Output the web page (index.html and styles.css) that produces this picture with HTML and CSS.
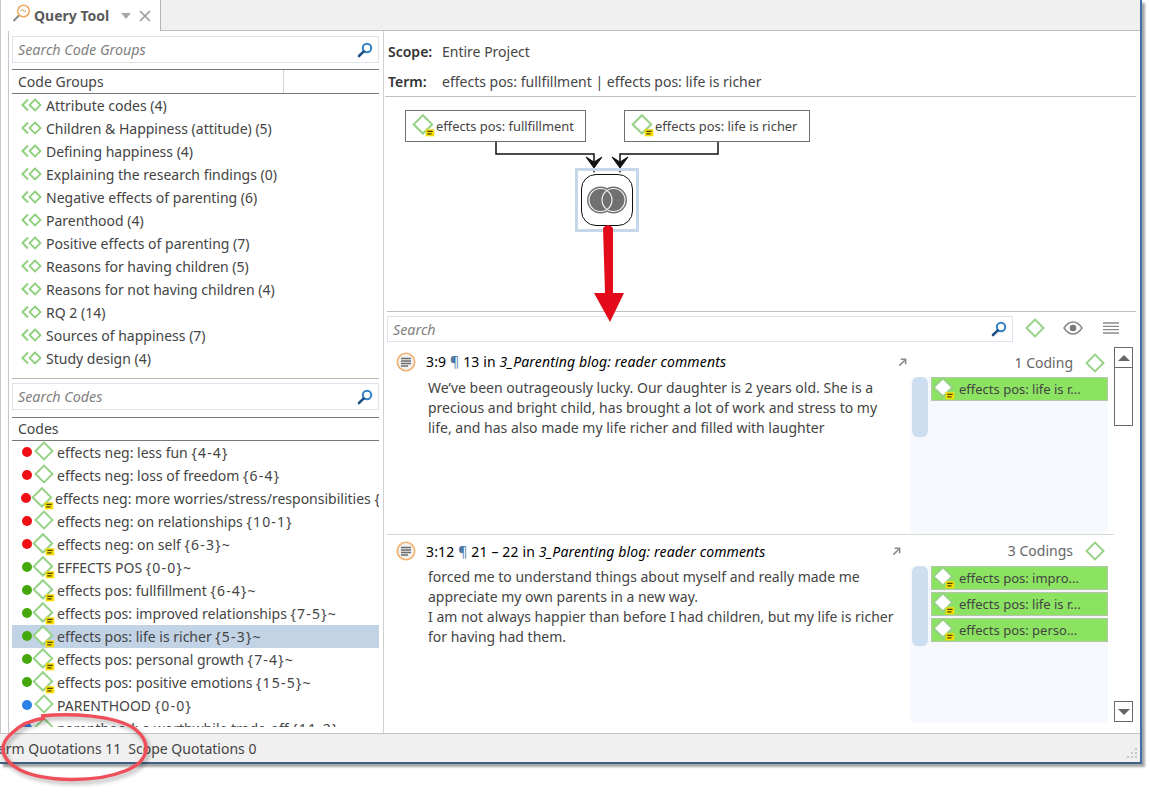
FILE: index.html
```html
<!DOCTYPE html>
<html lang="en">
<head>
<meta charset="utf-8">
<title>Query Tool</title>
<link rel="stylesheet" href="styles.css">
</head>
<body>
<svg class="defs" width="0" height="0" aria-hidden="true">
  <defs>
    <symbol id="search" viewBox="0 0 16 16">
      <circle cx="10" cy="6" r="4.2" fill="#fff" stroke="#2f7fc4" stroke-width="2"/>
      <path d="M6.8 9.4 2 14" stroke="#1d4f86" stroke-width="2.6" stroke-linecap="round"/>
    </symbol>
    <symbol id="code" viewBox="0 0 20 20">
      <path d="M10 1.500 18.500 10 10 18.500 1.500 10Z" fill="#fff" stroke="#96d286" stroke-width="1.900"/>
    </symbol>
    <symbol id="codememo" viewBox="0 0 24 24">
      <path d="M11 2 19.500 10.500 11 19 2.500 10.500Z" fill="#fff" stroke="#96d286" stroke-width="1.900"/>
      <rect x="13.500" y="15" width="8" height="6.500" fill="#f6dc00"/>
      <path d="M15 17h5M15 19.200h4" stroke="#4a4400" stroke-width="1.100"/>
    </symbol>
    <symbol id="group" viewBox="0 0 22 14">
      <path d="M7 1.500 1.500 7 7 12.500" fill="none" stroke="#8ed07c" stroke-width="2"/>
      <path d="M14 1.500 19.500 7 14 12.500 8.500 7Z" fill="#fff" stroke="#8ed07c" stroke-width="1.800"/>
    </symbol>
    <symbol id="quote" viewBox="0 0 20 20">
      <circle cx="10" cy="10" r="8.700" fill="#f1f1f1" stroke="#f3b06c" stroke-width="1.600"/>
      <path d="M5 6.500h10M5 9h10M5 11.500h10M5 14h7" stroke="#6c6c6c" stroke-width="1.400"/>
    </symbol>
    <symbol id="jump" viewBox="0 0 10 10">
      <path d="M1.500 8.500 7.500 2.500M3 1.500h5.500V7" fill="none" stroke="#8a8a8a" stroke-width="1.700"/>
    </symbol>
  </defs>
</svg>

<div class="window">
  <header class="tabbar">
    <div class="tab">
      <svg class="tab-icon" viewBox="0 0 20 20"><circle cx="12.500" cy="7" r="5.800" fill="#fff" stroke="#f0a860" stroke-width="1.500"/><path d="M8 11.500 2.500 17" stroke="#8a8a8a" stroke-width="2"/><path d="M9.500 7l2-1.500 2 2 1.500-1" fill="none" stroke="#c98a50"/></svg>
      <span class="tab-title">Query Tool</span>
      <span class="tab-caret"></span>
      <svg class="tab-close" viewBox="0 0 12 12"><path d="M1 1 11 11M11 1 1 11" stroke="#9a9a9a" stroke-width="1.600"/></svg>
    </div>
  </header>

  <main class="content">
    <aside class="left">
      <section class="panel panel-groups">
        <div class="search"><span class="search-text">Search Code Groups</span><svg class="search-icon"><use href="#search"/></svg></div>
        <div class="list-head"><span class="list-head-cell">Code Groups</span></div>
        <ul class="list">
          <li class="group"><svg class="group-icon"><use href="#group"/></svg>Attribute codes (4)</li>
          <li class="group"><svg class="group-icon"><use href="#group"/></svg>Children &amp; Happiness (attitude) (5)</li>
          <li class="group"><svg class="group-icon"><use href="#group"/></svg>Defining happiness (4)</li>
          <li class="group"><svg class="group-icon"><use href="#group"/></svg>Explaining the research findings (0)</li>
          <li class="group"><svg class="group-icon"><use href="#group"/></svg>Negative effects of parenting (6)</li>
          <li class="group"><svg class="group-icon"><use href="#group"/></svg>Parenthood (4)</li>
          <li class="group"><svg class="group-icon"><use href="#group"/></svg>Positive effects of parenting (7)</li>
          <li class="group"><svg class="group-icon"><use href="#group"/></svg>Reasons for having children (5)</li>
          <li class="group"><svg class="group-icon"><use href="#group"/></svg>Reasons for not having children (4)</li>
          <li class="group"><svg class="group-icon"><use href="#group"/></svg>RQ 2 (14)</li>
          <li class="group"><svg class="group-icon"><use href="#group"/></svg>Sources of happiness (7)</li>
          <li class="group"><svg class="group-icon"><use href="#group"/></svg>Study design (4)</li>
        </ul>
      </section>
      <section class="panel panel-codes">
        <div class="search"><span class="search-text">Search Codes</span><svg class="search-icon"><use href="#search"/></svg></div>
        <div class="list-head"><span>Codes</span></div>
        <ul class="list list-codes">
          <li class="code"><i class="dot red"></i><svg class="code-icon"><use href="#code"/></svg><span>effects neg: less fun <span class="cnt">{4-4}</span></span></li>
          <li class="code"><i class="dot red"></i><svg class="code-icon"><use href="#code"/></svg><span>effects neg: loss of freedom <span class="cnt">{6-4}</span></span></li>
          <li class="code code-shift"><i class="dot red"></i><svg class="code-icon memo"><use href="#codememo"/></svg><span>effects neg: more worries/stress/responsibilities <span class="cnt">{11-2}~</span></span></li>
          <li class="code"><i class="dot red"></i><svg class="code-icon"><use href="#code"/></svg><span>effects neg: on relationships <span class="cnt">{10-1}</span></span></li>
          <li class="code"><i class="dot red"></i><svg class="code-icon memo"><use href="#codememo"/></svg><span>effects neg: on self <span class="cnt">{6-3}~</span></span></li>
          <li class="code"><i class="dot green"></i><svg class="code-icon memo"><use href="#codememo"/></svg><span>EFFECTS POS <span class="cnt">{0-0}~</span></span></li>
          <li class="code"><i class="dot green"></i><svg class="code-icon memo"><use href="#codememo"/></svg><span>effects pos: fullfillment <span class="cnt">{6-4}~</span></span></li>
          <li class="code"><i class="dot green"></i><svg class="code-icon memo"><use href="#codememo"/></svg><span>effects pos: improved relationships <span class="cnt">{7-5}~</span></span></li>
          <li class="code selected"><i class="dot green"></i><svg class="code-icon memo"><use href="#codememo"/></svg><span>effects pos: life is richer <span class="cnt">{5-3}~</span></span></li>
          <li class="code"><i class="dot green"></i><svg class="code-icon memo"><use href="#codememo"/></svg><span>effects pos: personal growth <span class="cnt">{7-4}~</span></span></li>
          <li class="code"><i class="dot green"></i><svg class="code-icon memo"><use href="#codememo"/></svg><span>effects pos: positive emotions <span class="cnt">{15-5}~</span></span></li>
          <li class="code"><i class="dot blue"></i><svg class="code-icon"><use href="#code"/></svg><span>PARENTHOOD <span class="cnt">{0-0}</span></span></li>
          <li class="code"><i class="dot blue"></i><svg class="code-icon"><use href="#code"/></svg><span>parenthood: a worthwhile trade-off <span class="cnt">{11-2}</span></span></li>
        </ul>
      </section>
    </aside>

    <section class="right">
      <div class="meta">
        <div class="meta-row"><b class="meta-label">Scope:</b><span>Entire Project</span></div>
        <div class="meta-row"><b class="meta-label">Term:</b><span>effects pos: fullfillment | effects pos: life is richer</span></div>
      </div>

      <div class="diagram">
        <div class="node node-a"><svg class="node-icon"><use href="#codememo"/></svg>effects pos: fullfillment</div>
        <div class="node node-b"><svg class="node-icon"><use href="#codememo"/></svg>effects pos: life is richer</div>
        <svg class="wires" viewBox="0 0 260 90">
          <path d="M109 45V57H207V70M331 45V57H233V70" fill="none" stroke="#111" stroke-width="1.500"/>
          <path d="M199 60 207 71 215 60 207 65ZM225 60 233 71 241 60 233 65Z" fill="#111" stroke="#111" stroke-width="1"/>
          <path d="M205 72h4l-2 4ZM231 72h4l-2 4Z" fill="#111"/>
        </svg>
        <div class="op-select">
          <div class="op">
            <svg class="venn" viewBox="0 0 42 28">
              <circle cx="14.500" cy="14" r="13.500" fill="#707070"/>
              <circle cx="27.500" cy="14" r="13.500" fill="#707070"/>
              <circle cx="14.500" cy="14" r="11.500" fill="none" stroke="#f2f2f2" stroke-width="1.200"/>
              <circle cx="27.500" cy="14" r="11.500" fill="none" stroke="#f2f2f2" stroke-width="1.200"/>
            </svg>
          </div>
        </div>
      </div>

      <div class="results-bar">
        <div class="search search-results"><span class="search-text">Search</span><svg class="search-icon"><use href="#search"/></svg></div>
        <svg class="tool tool-code"><use href="#code"/></svg>
        <svg class="tool tool-eye" viewBox="0 0 20 14"><path d="M1 7C4 2.500 7 1 10 1s6 1.500 9 6c-3 4.500-6 6-9 6S4 11.500 1 7Z" fill="#fff" stroke="#8a8a8a" stroke-width="1.500"/><circle cx="10" cy="7" r="3.300" fill="#7a7a7a"/></svg>
        <svg class="tool tool-menu" viewBox="0 0 16 12"><path d="M0 1h16M0 4.330h16M0 7.660h16M0 11h16" stroke="#8a8a8a" stroke-width="1.300"/></svg>
      </div>

      <div class="results">
        <div class="quotes">
          <article class="quote">
            <div class="quote-main">
              <h2 class="quote-title"><svg class="quote-icon"><use href="#quote"/></svg><span>3:9 <span class="pilcrow">¶</span> 13 in <em>3_Parenting blog: reader comments</em></span></h2>
              <p class="quote-text">We’ve been outrageously lucky. Our daughter is 2 years old. She is a precious and bright child, has brought a lot of work and stress to my life, and has also made my life richer and filled with laughter</p>
            </div>
            <svg class="quote-jump"><use href="#jump"/></svg>
            <div class="quote-side">
              <div class="count">1 Coding<svg class="count-icon"><use href="#code"/></svg></div>
              <div class="codings">
                <div class="bar bar-short"></div>
                <div class="chips">
                  <div class="chip"><svg class="chip-icon"><use href="#codememo"/></svg>effects pos: life is r...</div>
                </div>
              </div>
            </div>
          </article>
          <article class="quote quote-second">
            <div class="quote-main">
              <h2 class="quote-title"><svg class="quote-icon"><use href="#quote"/></svg><span>3:12 <span class="pilcrow">¶</span> 21 – 22 in <em>3_Parenting blog: reader comments</em></span></h2>
              <p class="quote-text">forced me to understand things about myself and really made me appreciate my own parents in a new way.<br>I am not always happier than before I had children, but my life is richer for having had them.</p>
            </div>
            <svg class="quote-jump"><use href="#jump"/></svg>
            <div class="quote-side">
              <div class="count">3 Codings<svg class="count-icon"><use href="#code"/></svg></div>
              <div class="codings">
                <div class="bar bar-tall"></div>
                <div class="chips">
                  <div class="chip"><svg class="chip-icon"><use href="#codememo"/></svg>effects pos: impro...</div>
                  <div class="chip"><svg class="chip-icon"><use href="#codememo"/></svg>effects pos: life is r...</div>
                  <div class="chip"><svg class="chip-icon"><use href="#codememo"/></svg>effects pos: perso...</div>
                </div>
              </div>
            </div>
          </article>
        </div>
        <div class="scrollbar">
          <div class="sb-btn"><i class="sb-up"></i></div>
          <div class="sb-thumb"></div>
          <div class="sb-track"></div>
          <div class="sb-btn"><i class="sb-down"></i></div>
        </div>
      </div>
    </section>
  </main>

  <footer class="status">
    <span class="status-term">Term Quotations 11</span>
    <span>Scope Quotations 0</span>
    <svg class="grip" viewBox="0 0 14 14"><path d="M11 1h2v2h-2zM7 5h2v2H7zM11 5h2v2h-2zM3 9h2v2H3zM7 9h2v2H7zM11 9h2v2h-2z" fill="#c9c9c9"/></svg>
  </footer>
</div>

<svg class="annot-arrow" viewBox="0 0 34 100"><path d="M10 3Q15-3 20 3L20 68H31L17 97 1 68H12Z" fill="#e30b1a"/></svg>
<svg class="annot-ring" viewBox="0 0 160 70">
  <path d="M41 3C70 0 115 2 135 16 152 30 150 48 125 58 95 70 45 69 20 57 0 46-2 32 12 20 20 12 30 7 45 5" fill="none" stroke="#ef4f5a" stroke-width="3.500"/>
</svg>
</body>
</html>
```

FILE: styles.css
```css
* { box-sizing: border-box; }
html, body { margin: 0; padding: 0; }
body {
  width: 1150px;
  height: 804px;
  background: #fff;
  position: relative;
  overflow: hidden;
  font-family: "Noto Sans", "Open Sans", sans-serif;
  font-size: 14px;
  color: #444;
}
.defs { position: absolute; }
.window {
  width: 1142px;
  height: 764px;
  display: flex;
  flex-direction: column;
  background: #fff;
  border-right: 2px solid #3f6ea8;
  border-bottom: 2px solid #3f6186;
  box-shadow: 3px 3px 2px rgba(0,0,0,.35);
}

/* tab strip */
.tabbar {
  height: 31px;
  flex: none;
  background: #f0f0f0;
  border-bottom: 1px solid #c0c0c0;
  display: flex;
}
.tab {
  width: 161px;
  height: 31px;
  background: #fff;
  border-right: 1px solid #b5b5b5;
  border-left: 1px solid #c8c8c8;
  display: flex;
  align-items: center;
  padding-left: 10px;
}
.tab-icon { width: 20px; height: 20px; margin-top: -3px; }
.tab-title { font-weight: 700; font-size: 14px; color: #5a5a5a; margin-left: 3px; }
.tab-caret {
  margin-left: 12px;
  border-left: 5px solid transparent;
  border-right: 5px solid transparent;
  border-top: 6px solid #a8a8a8;
}
.tab-close { width: 12px; height: 12px; margin-left: 8px; }

.content { flex: 1; min-height: 0; display: flex; overflow: hidden; }

/* left column */
.left {
  width: 384px;
  flex: none;
  border-left: 1px solid #c8c8c8;
  border-right: 1px solid #d0d0d0;
  padding: 0 4px 0 7px;
  display: flex;
  flex-direction: column;
  position: relative;
}
.left::before {
  content: "";
  position: absolute;
  left: 7px;
  top: 0;
  bottom: 0;
  width: 1px;
  background: #c8c8c8;
}
.panel { display: flex; flex-direction: column; margin-left: 4px; }
.panel-groups { height: 348px; padding-top: 5px; border-bottom: 1px solid #b8b8b8; flex: none; }
.panel-codes { flex: 1; min-height: 0; padding: 4px 0 6px; }

.search {
  height: 27px;
  flex: none;
  display: flex;
  align-items: center;
  justify-content: space-between;
  border: 1px solid #dbe3ec;
  padding: 0 5px;
  background: #fff;
}
.search-text { font-style: italic; color: #808080; font-size: 14.300px; }
.search-icon { width: 16px; height: 16px; }

.list-head {
  height: 24px;
  flex: none;
  margin-top: 7px;
  border-top: 1px solid #777;
  border-bottom: 1px solid #777;
  padding-left: 6px;
  line-height: 21px;
  color: #444;
}
.panel-groups .list-head { height: 25px; margin-top: 6px; line-height: 23px; }
.list-head-cell {
  display: block;
  width: 266px;
  height: 23px;
  border-right: 1px solid #d4d4d4;
}
.list { list-style: none; margin: 0; padding: 0; }
.list-codes { overflow: hidden; flex: 1; min-height: 0; }
.group {
  height: 23px;
  display: flex;
  align-items: center;
  padding-left: 9px;
  white-space: nowrap;
}
.group-icon { width: 22px; height: 14px; margin-right: 3px; margin-top: -1px; }

.code {
  height: 23px;
  display: flex;
  align-items: center;
  white-space: nowrap;
  padding-left: 10px;
  overflow: hidden;
}
.cnt { letter-spacing: 1.200px; }
.code-shift { padding-left: 9px; }
.code-shift span { margin-left: -1px; }
.code-shift .cnt { margin-left: 0; }
.dot { width: 10px; height: 10px; border-radius: 50%; flex: none; margin-top: -1px; }
.red { background: #f00f14; }
.green { background: #44a80c; }
.blue { background: #2a82e4; }
.code-icon { width: 20px; height: 20px; flex: none; margin: -3px 3px 0 2px; }
.code-icon.memo { width: 26px; height: 26px; margin: 0 0 0 -1px; }
.selected { background: #c2d3e6; }

/* right column */
.right { flex: 1; min-width: 0; display: flex; flex-direction: column; padding: 0 4px 0 3px; }
.meta { height: 66px; flex: none; border-bottom: 1px solid #c0c0c0; margin-left: -2px; padding: 10px 0 0 3px; }
.meta-row { display: flex; height: 30px; line-height: 22px; }
.meta-label { width: 54px; font-weight: 600; color: #333; }

.diagram { height: 215px; flex: none; position: relative; border-bottom: 1px solid #bdbdbd; }
.node {
  position: absolute;
  top: 13px;
  height: 32px;
  border: 1px solid #707070;
  background: #fff;
  display: flex;
  align-items: center;
  font-size: 12.900px;
  white-space: nowrap;
  padding-left: 5px;
}
.node-a { left: 18px; width: 181px; }
.node-b { left: 237px; width: 186px; }
.node-icon { width: 26px; height: 26px; margin-right: -1px; flex: none; }
.wires { position: absolute; left: 0; top: 0; width: 260px; height: 90px; overflow: visible; }
.op-select {
  position: absolute;
  left: 188px;
  top: 71px;
  width: 64px;
  height: 64px;
  border: 3px solid #c6d7ea;
  padding: 3px;
}
.op {
  width: 52px;
  height: 52px;
  border: 1px solid #111;
  border-radius: 15px;
  background: #fff;
  display: flex;
  align-items: center;
  justify-content: center;
}
.venn { width: 42px; height: 28px; }

.results-bar { height: 33px; flex: none; display: flex; align-items: flex-start; padding-top: 4px; }
.search-results { width: 626px; height: 26px; }
.tool { flex: none; }
.tool-code { width: 20px; height: 20px; margin: 2px 0 0 12px; }
.tool-eye { width: 20px; height: 14px; margin: 5px 0 0 18px; }
.tool-menu { width: 16px; height: 12px; margin: 6px 0 0 20px; }

.results { flex: 1; min-height: 0; display: flex; }
.quotes { width: 727px; flex: none; display: flex; flex-direction: column; }
.quote { height: 190px; flex: none; display: flex; border-bottom: 1px solid #d8d8d8; position: relative; }
.quote-second { height: 188px; border-bottom: 0; }
.quote-main { width: 504px; flex: none; padding-left: 9px; }
.quote-title {
  margin: 0;
  height: 33px;
  display: flex;
  align-items: center;
  font-size: 14px;
  font-weight: 400;
  letter-spacing: .15px;
  color: #000;
  white-space: nowrap;
}
.quote-second .quote-title { height: 32px; }
.quote-icon { width: 20px; height: 20px; margin-right: 10px; }
.pilcrow { color: #4c78a8; }
.quote-text { margin: 0 0 0 32px; line-height: 20px; width: 473px; color: #444; }
.quote-jump { position: absolute; left: 511px; top: 13px; width: 9px; height: 9px; }
.quote-second .quote-jump { left: 505px; top: 12px; }
.quote-side { width: 198px; margin-left: 19px; flex: none; display: flex; flex-direction: column; }
.count {
  height: 32px;
  flex: none;
  padding-top: 3px;
  display: flex;
  align-items: center;
  justify-content: flex-end;
  color: #666;
  white-space: nowrap;
  margin-right: 3px;
}
.quote-second .count { height: 31px; padding-top: 0; }
.count-icon { width: 20px; height: 20px; margin-left: 12px; }
.codings { flex: 1; min-height: 0; background: #f5f8fc; border-radius: 6px 0 6px 6px; display: flex; gap: 3px; padding-left: 2px; }
.bar { width: 16px; flex: none; background: #cddef0; border-radius: 6px; }
.bar-short { height: 60px; }
.bar-tall { height: 80px; }
.chips { flex: 1; display: flex; flex-direction: column; gap: 2px; }
.chip {
  height: 24px;
  background: #8ce362;
  border: 1px solid #b5c5ae;
  display: flex;
  align-items: center;
  font-size: 13px;
  color: #444;
  white-space: nowrap;
}
.chip-icon { width: 26px; height: 26px; margin: 0 2px 0 -1px; flex: none; }

.scrollbar { width: 19px; margin-top: 2px; height: 375px; display: flex; flex-direction: column; flex: none; }
.sb-btn { height: 21px; border: 1px solid #6a6a6a; display: flex; align-items: center; justify-content: center; flex: none; background: #fff; }
.sb-up { border-left: 6px solid transparent; border-right: 6px solid transparent; border-bottom: 6px solid #666; }
.sb-down { border-left: 6px solid transparent; border-right: 6px solid transparent; border-top: 6px solid #666; }
.sb-thumb { height: 58px; border: 1px solid #6a6a6a; border-top: 0; flex: none; background: #fff; }
.sb-track { flex: 1; }

/* status bar */
.status {
  height: 29px;
  flex: none;
  background: #f0f0f0;
  border-top: 1px solid #c4c4c4;
  display: flex;
  align-items: center;
  gap: 7px;
  position: relative;
  overflow: hidden;
  white-space: nowrap;
}
.status-term { margin-left: -9px; }
.grip { position: absolute; right: 2px; bottom: 1px; width: 14px; height: 14px; }

/* annotations lying over the window */
.annot-arrow { position: absolute; left: 593px; top: 225px; width: 34px; height: 100px; overflow: visible; }
.annot-ring {
  position: absolute;
  left: 0;
  top: 713px;
  width: 160px;
  height: 70px;
  overflow: visible;
  filter: drop-shadow(2px 3px 2px rgba(0,0,0,.3));
}
```
